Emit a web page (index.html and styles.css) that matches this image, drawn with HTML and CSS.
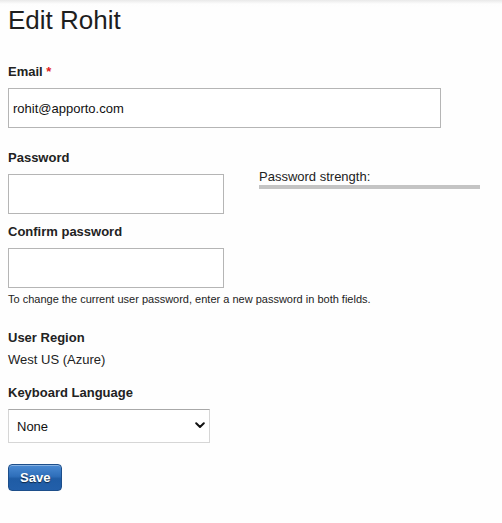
FILE: index.html
```html
<!DOCTYPE html>
<html lang="en">
<head>
<meta charset="utf-8">
<title>Edit Rohit</title>
<link rel="stylesheet" href="styles.css">
</head>
<body>
<main class="page">
  <h1 class="title">Edit Rohit</h1>
  <form class="form">
    <div class="field field-email">
      <label class="label" for="email">Email <span class="required">*</span></label>
      <input class="input input-wide" id="email" type="text" value="rohit@apporto.com">
    </div>

    <div class="password-row">
      <div class="password-fields">
        <div class="field field-password">
          <label class="label" for="pass">Password</label>
          <input class="input input-narrow" id="pass" type="password">
        </div>
        <div class="field field-confirm">
          <label class="label" for="pass2">Confirm password</label>
          <input class="input input-narrow" id="pass2" type="password">
        </div>
      </div>
      <div class="strength">
        <div class="strength-text">Password strength:</div>
        <div class="strength-bar"></div>
      </div>
    </div>

    <p class="hint">To change the current user password, enter a new password in both fields.</p>

    <div class="field field-region">
      <div class="label">User Region</div>
      <div class="value">West US (Azure)</div>
    </div>

    <div class="field field-keyboard">
      <label class="label" for="kb">Keyboard Language</label>
      <div class="select-wrap">
        <select class="select" id="kb">
          <option>None</option>
        </select>
        <svg class="chevron" width="10" height="7" viewBox="0 0 10 7" aria-hidden="true">
          <path d="M1.2 1.3 L5 5 L8.8 1.3" fill="none" stroke="#111" stroke-width="2" stroke-linecap="round" stroke-linejoin="round"/>
        </svg>
      </div>
    </div>

    <div class="actions">
      <button class="save" type="button">Save</button>
    </div>
  </form>
</main>
</body>
</html>
```

FILE: styles.css
```css
* {
  box-sizing: border-box;
}

html, body {
  margin: 0;
  padding: 0;
}

body {
  background: linear-gradient(#e9e9e9 0, #fdfdfd 4px, #fefefe 8px) no-repeat, #fefefe;
  color: #222;
  font-family: "Liberation Sans", Arial, Helvetica, sans-serif;
  font-size: 13px;
  width: 502px;
  height: 523px;
  overflow: hidden;
}

.page {
  padding: 5px 8px 0;
}

.title {
  margin: 0 0 28px;
  font-size: 26px;
  font-weight: normal;
  line-height: 30px;
  color: #1e1e1e;
}

.form {
  display: flex;
  flex-direction: column;
}

.field {
  display: flex;
  flex-direction: column;
  align-items: flex-start;
}

.label {
  font-weight: bold;
  font-size: 13px;
  line-height: 17px;
  margin-bottom: 8px;
  color: #222;
}

.required {
  color: #e0201a;
}

.input {
  height: 40px;
  border: 1px solid #b5b5b5;
  background: #fff;
  padding: 0 4px;
  font-family: inherit;
  font-size: 13px;
  color: #111;
  outline: none;
  border-radius: 0;
}

.input-wide {
  width: 433px;
}

.input-narrow {
  width: 216px;
}

.password-row {
  display: flex;
  gap: 35px;
  margin-top: 21px;
}

.field-confirm {
  margin-top: 9px;
}

.strength {
  width: 221px;
  padding-top: 19px;
}

.strength-text {
  line-height: 17px;
  color: #222;
}

.strength-bar {
  height: 4px;
  margin-top: 0;
  background: #c4c4c4;
}

.hint {
  margin: 4px 0 0;
  font-size: 11px;
  line-height: 14px;
  color: #222;
}

.field-region {
  margin-top: 23px;
}

.field-region .label {
  margin-bottom: 5px;
}

.value {
  line-height: 17px;
}

.field-keyboard {
  margin-top: 16px;
}

.select-wrap {
  position: relative;
}

.select {
  appearance: none;
  -webkit-appearance: none;
  width: 202px;
  height: 34px;
  padding: 0 8px;
  border: 1px solid #d6d6d6;
  border-top-color: #a8a8a8;
  border-radius: 0;
  background: #fff;
  font-family: inherit;
  font-size: 13px;
  color: #111;
  outline: none;
}

.chevron {
  position: absolute;
  right: 5px;
  top: 13px;
}

.actions {
  margin-top: 21px;
}

.save {
  height: 27px;
  padding: 0 11px;
  border: 1px solid #1d4e8a;
  border-radius: 4px;
  background: linear-gradient(#4a8ad3 0%, #2f6fba 45%, #1f5ca5 55%, #225faa 100%);
  box-shadow: inset 0 1px 0 rgba(255, 255, 255, 0.35);
  color: #fff;
  font-family: inherit;
  font-size: 13px;
  font-weight: bold;
  text-shadow: 0 1px 1px rgba(0, 0, 0, 0.6);
  cursor: pointer;
}
```
